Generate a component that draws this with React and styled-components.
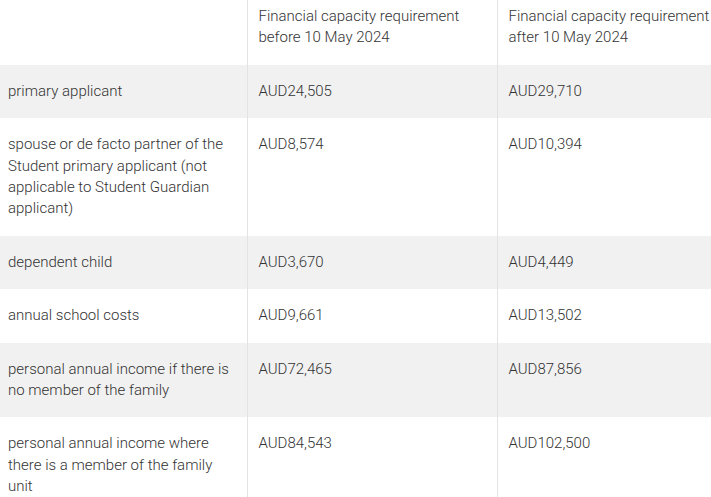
import React from "react";
import styled, { createGlobalStyle } from "styled-components";

const GlobalStyle = createGlobalStyle`
   body {
      margin: 0;
      background-color: #fff;
      font-family: Roboto, "Liberation Sans", sans-serif;
      overflow: hidden;
   }
`;

const Frame = styled.div`
   width: 100%;
   overflow: hidden;
`;

const Table = styled.table`
   border-collapse: collapse;
   table-layout: fixed;
   width: 747px;
   font-size: 15px;
   font-weight: 300;
   line-height: 21.4px;
   color: #333;
`;

const Col = styled.col`
   width: ${({ $w }) => $w}px;
`;

const Row = styled.tr`
   background-color: ${({ $shade }) => ($shade ? "#f1f1f1" : "#fff")};
`;

const HeadCell = styled.th`
   text-align: left;
   font-weight: 300;
   vertical-align: top;
   padding: 6px 10px 16px 11px;
   border-right: 1px solid #e3e3e3;
   &:first-child {
      padding-left: 8px;
   }
`;

const Cell = styled.td`
   vertical-align: top;
   padding: 16px 10px 16px 11px;
   border-right: 1px solid #e3e3e3;
   &:first-child {
      padding-left: 8px;
   }
`;

const rows = [
   ["primary applicant", "AUD24,505", "AUD29,710"],
   [
      "spouse or de facto partner of the Student primary applicant (not applicable to Student Guardian applicant)",
      "AUD8,574",
      "AUD10,394",
   ],
   ["dependent child", "AUD3,670", "AUD4,449"],
   ["annual school costs", "AUD9,661", "AUD13,502"],
   [
      "personal annual income if there is no member of the family",
      "AUD72,465",
      "AUD87,856",
   ],
   [
      "personal annual income where there is a member of the family unit",
      "AUD84,543",
      "AUD102,500",
   ],
];

const App = () => {
   return (
      <>
         <GlobalStyle />
         <Frame>
            <Table>
               <colgroup>
                  <Col $w={247} />
                  <Col $w={250} />
                  <Col $w={250} />
               </colgroup>
               <thead>
                  <Row>
                     <HeadCell></HeadCell>
                     <HeadCell>Financial capacity requirement before 10 May 2024</HeadCell>
                     <HeadCell>Financial capacity requirement after 10 May 2024</HeadCell>
                  </Row>
               </thead>
               <tbody>
                  {rows.map((r, i) => (
                     <Row key={i} $shade={i % 2 === 0}>
                        {r.map((c, j) => (
                           <Cell key={j}>{c}</Cell>
                        ))}
                     </Row>
                  ))}
               </tbody>
            </Table>
         </Frame>
      </>
   );
};

export default App;
